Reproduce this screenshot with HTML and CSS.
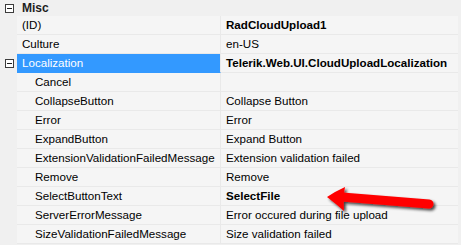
FILE: index.html
```html
<!DOCTYPE html>
<html lang="en">
  <head>
    <meta charset="utf-8">
    <title>Properties</title>
    <link rel="stylesheet" href="styles.css">
  </head>
  <body>
    <div class="grid">
      <div class="cat">
        <span class="toggle"></span>
        <span class="cat-name">Misc</span>
      </div>
      <div class="row">
        <div class="gut"></div>
        <div class="name">(ID)</div>
        <div class="value bold">RadCloudUpload1</div>
      </div>
      <div class="row">
        <div class="gut"></div>
        <div class="name">Culture</div>
        <div class="value">en-US</div>
      </div>
      <div class="row">
        <div class="gut"><span class="toggle"></span></div>
        <div class="name selected">Localization</div>
        <div class="value bold">Telerik.Web.UI.CloudUploadLocalization</div>
      </div>
      <div class="row">
        <div class="gut"></div>
        <div class="name sub">Cancel</div>
        <div class="value"></div>
      </div>
      <div class="row">
        <div class="gut"></div>
        <div class="name sub">CollapseButton</div>
        <div class="value">Collapse Button</div>
      </div>
      <div class="row">
        <div class="gut"></div>
        <div class="name sub">Error</div>
        <div class="value">Error</div>
      </div>
      <div class="row">
        <div class="gut"></div>
        <div class="name sub">ExpandButton</div>
        <div class="value">Expand Button</div>
      </div>
      <div class="row">
        <div class="gut"></div>
        <div class="name sub">ExtensionValidationFailedMessage</div>
        <div class="value">Extension validation failed</div>
      </div>
      <div class="row">
        <div class="gut"></div>
        <div class="name sub">Remove</div>
        <div class="value">Remove</div>
      </div>
      <div class="row">
        <div class="gut"></div>
        <div class="name sub">SelectButtonText</div>
        <div class="value bold">SelectFile</div>
      </div>
      <div class="row">
        <div class="gut"></div>
        <div class="name sub">ServerErrorMessage</div>
        <div class="value">Error occured during file upload</div>
      </div>
      <div class="row">
        <div class="gut"></div>
        <div class="name sub">SizeValidationFailedMessage</div>
        <div class="value">Size validation failed</div>
      </div>

      <!-- red callout arrow pointing at SelectFile -->
      <svg class="arrow" width="120" height="40" viewBox="0 0 120 40">
        <defs>
          <filter id="shade" x="-20%" y="-40%" width="140%" height="180%">
            <feGaussianBlur in="SourceAlpha" stdDeviation="1.5"/>
            <feOffset dx="1.5" dy="2" result="b"/>
            <feComponentTransfer><feFuncA type="linear" slope="0.75"/></feComponentTransfer>
            <feMerge><feMergeNode/><feMergeNode in="SourceGraphic"/></feMerge>
          </filter>
        </defs>
        <g filter="url(#shade)">
          <path d="M22 19 L109 26" stroke="#ff0000" stroke-width="9" stroke-linecap="round" fill="none"/>
          <path d="M7 19 Q16 13 25 9 Q23 19 24 33 Q15 25 7 19 Z" fill="#ff0000"/>
        </g>
      </svg>
    </div>
  </body>
</html>
```

FILE: styles.css
```css
body { margin: 0; background: #f0f0f0; font-family: "Segoe UI", "Liberation Sans", Arial, sans-serif; font-size: 11.6px; color: #000; }
.grid { position: relative; width: 458px; }

.cat { height: 16px; display: flex; align-items: center; background: #f0f0f0; }
.cat .toggle { margin: 0 8px 0 5px; }
.cat-name { font-weight: bold; font-size: 12px; color: #1e1e1e; }

.toggle { display: inline-block; position: relative; width: 7px; height: 7px; border: 1px solid #3c3c3c; background: #fff; }
.toggle::after { content: ""; position: absolute; left: 1px; top: 3px; width: 5px; height: 1px; background: #1e1e1e; }

.row { display: flex; height: 19px; }
.gut { width: 17px; flex: none; display: flex; align-items: center; }
.gut .toggle { margin-left: 5px; margin-top: -1px; }
.name { width: 198px; flex: none; padding-left: 5px; line-height: 18px; background: #f5f5f5; border-bottom: 1px solid #e9e9e9; border-right: 1px solid #e9e9e9; white-space: nowrap; overflow: hidden; }
.name.sub { padding-left: 18px; width: 185px; }
.name.selected { background: #3399ff; color: #fff; border-bottom-color: #3399ff; }
.value { flex: 1; padding-left: 5px; line-height: 18px; background: #f5f5f5; border-bottom: 1px solid #e9e9e9; white-space: nowrap; overflow: hidden; }
.bold { font-weight: bold; }

.arrow { position: absolute; left: 320px; top: 178px; }
```
